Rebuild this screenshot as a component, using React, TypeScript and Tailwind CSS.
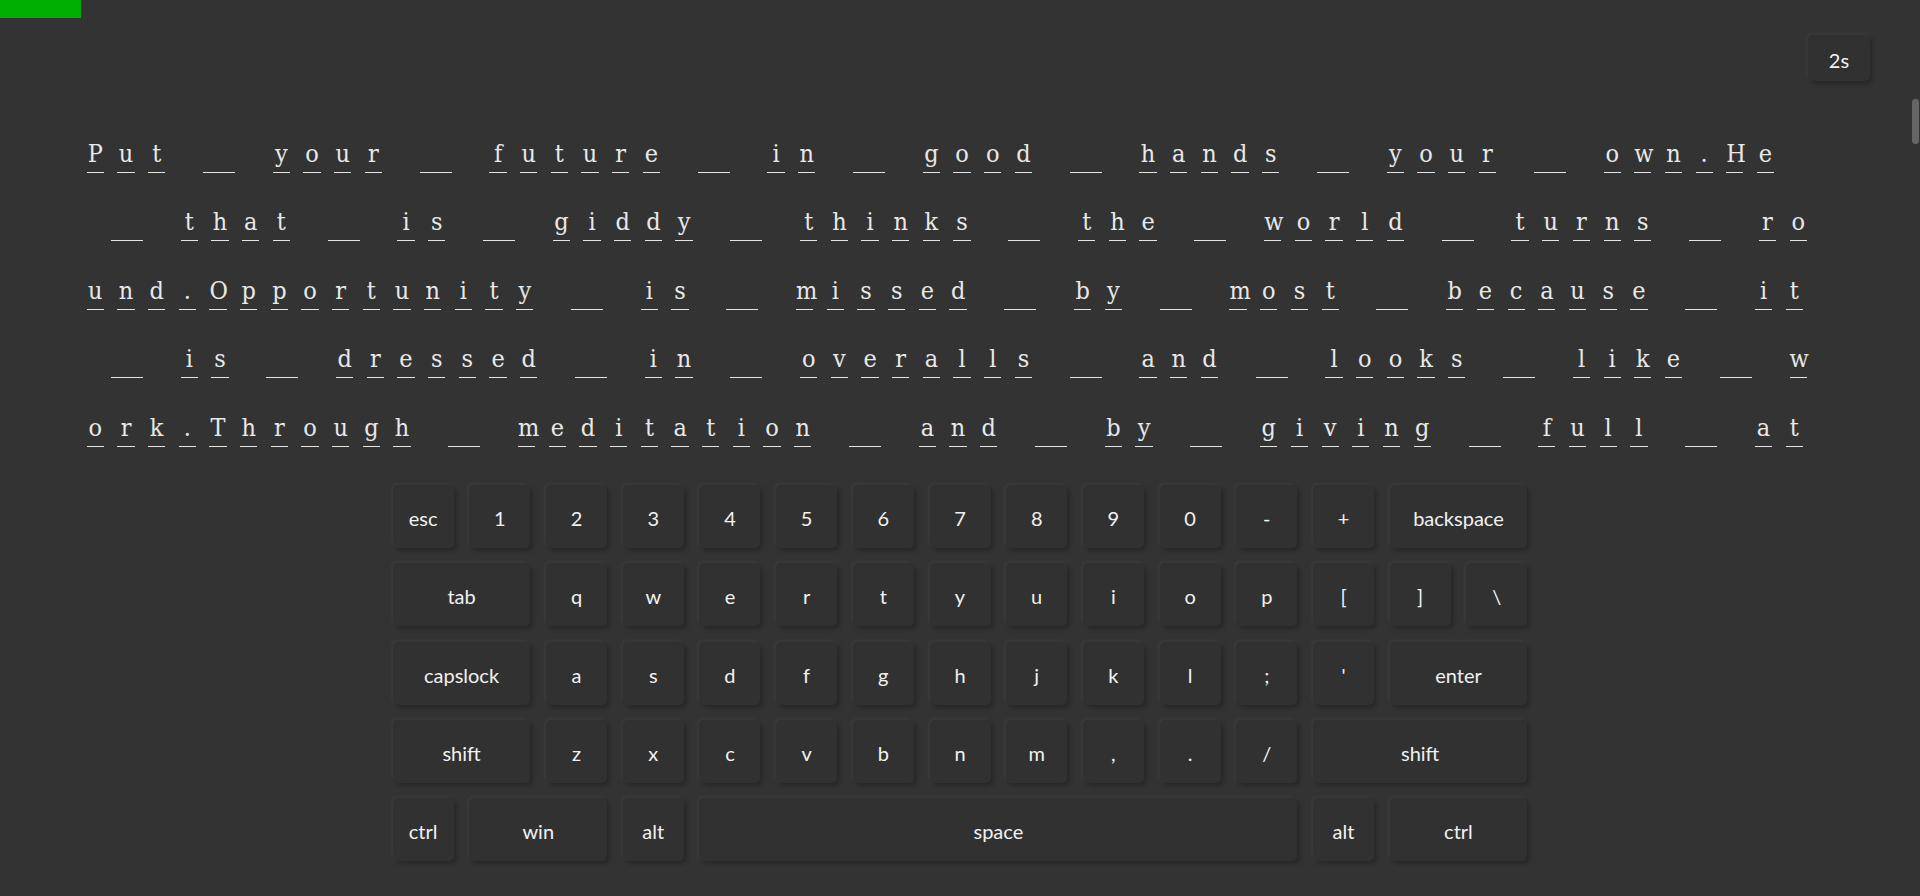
import React from "react";

const LINES = [
  "Put your future in good hands your own.He",
  " that is giddy thinks the world turns ro",
  "und.Opportunity is missed by most because it",
  " is dressed in overalls and looks like w",
  "ork.Through meditation and by giving full at",
];

type K = { label: string; span?: 1 | 2 | 3 | 8 };

const ROWS: K[][] = [
  [
    { label: "esc" },
    { label: "1" },
    { label: "2" },
    { label: "3" },
    { label: "4" },
    { label: "5" },
    { label: "6" },
    { label: "7" },
    { label: "8" },
    { label: "9" },
    { label: "0" },
    { label: "-" },
    { label: "+" },
    { label: "backspace", span: 2 },
  ],
  [
    { label: "tab", span: 2 },
    { label: "q" },
    { label: "w" },
    { label: "e" },
    { label: "r" },
    { label: "t" },
    { label: "y" },
    { label: "u" },
    { label: "i" },
    { label: "o" },
    { label: "p" },
    { label: "[" },
    { label: "]" },
    { label: "\\" },
  ],
  [
    { label: "capslock", span: 2 },
    { label: "a" },
    { label: "s" },
    { label: "d" },
    { label: "f" },
    { label: "g" },
    { label: "h" },
    { label: "j" },
    { label: "k" },
    { label: "l" },
    { label: ";" },
    { label: "'" },
    { label: "enter", span: 2 },
  ],
  [
    { label: "shift", span: 2 },
    { label: "z" },
    { label: "x" },
    { label: "c" },
    { label: "v" },
    { label: "b" },
    { label: "n" },
    { label: "m" },
    { label: "," },
    { label: "." },
    { label: "/" },
    { label: "shift", span: 3 },
  ],
  [
    { label: "ctrl" },
    { label: "win", span: 2 },
    { label: "alt" },
    { label: "space", span: 8 },
    { label: "alt" },
    { label: "ctrl", span: 2 },
  ],
];

const spanClass: Record<number, string> = {
  1: "col-span-1",
  2: "col-span-2",
  3: "col-span-3",
  8: "col-span-8",
};

function Key({ k }: { k: K }) {
  return (
    <div
      className={`${spanClass[k.span ?? 1]} h-[63px] pt-[3px] flex items-center justify-center rounded-[5px] bg-[#313131] text-[20px] text-[#f1f1f1] shadow-[3px_3px_4px_rgba(0,0,0,0.22),-2px_-2px_3px_rgba(255,255,255,0.035)]`}
      style={{ fontFamily: "Lato, 'Open Sans', sans-serif" }}
    >
      {k.label}
    </div>
  );
}

function Char({ c }: { c: string }) {
  if (c === " ") {
    return (
      <span className="inline-block ml-[31px] mr-[31px] w-[32px] h-[36px] border-b border-[#e4e4e4]" />
    );
  }
  return (
    <span className="inline-block mx-[6.7px] w-[17.3px] h-[36px] leading-[33px] text-center border-b border-[#e4e4e4] whitespace-nowrap">
      <span className="inline-block">{c}</span>
    </span>
  );
}

export default function App() {
  return (
    <div className="relative w-full h-[896px] overflow-hidden bg-[#333333]">
      <div className="h-[18px] w-[81px] bg-[#00b000]" />

      <div className="flex justify-end pr-[50px] mt-[17px]">
        <div
          className="w-[62px] h-[46px] pt-[3px] flex items-center justify-center rounded-[5px] bg-[#313131] text-[20px] text-[#f3f3f3] shadow-[3px_3px_4px_rgba(0,0,0,0.22),-2px_-2px_3px_rgba(255,255,255,0.035)]"
          style={{ fontFamily: "Lato, 'Open Sans', sans-serif" }}
        >
          2s
        </div>
      </div>

      <div
        className="px-[80px] mt-[56px] flex flex-col gap-y-[32.4px] text-[25px] text-[#e8e8e8] font-stretch-condensed"
        style={{ fontFamily: "'DejaVu Serif', 'Liberation Serif', serif" }}
      >
        {LINES.map((line, i) => (
          <div key={i} className="flex">
            {line.split("").map((c, j) => (
              <Char key={j} c={c} />
            ))}
          </div>
        ))}
      </div>

      <div className="mt-[38.4px] mx-auto w-fit grid grid-cols-[repeat(15,61px)] auto-rows-[63px] gap-x-[15.7px] gap-y-[15.3px]">
        {ROWS.map((row, i) => (
          <React.Fragment key={i}>
            {row.map((k, j) => (
              <Key key={`${i}-${j}`} k={k} />
            ))}
          </React.Fragment>
        ))}
      </div>

      <div className="absolute right-[1px] top-[99px] w-[7px] h-[45px] rounded-full bg-[#666666]" />
    </div>
  );
}
